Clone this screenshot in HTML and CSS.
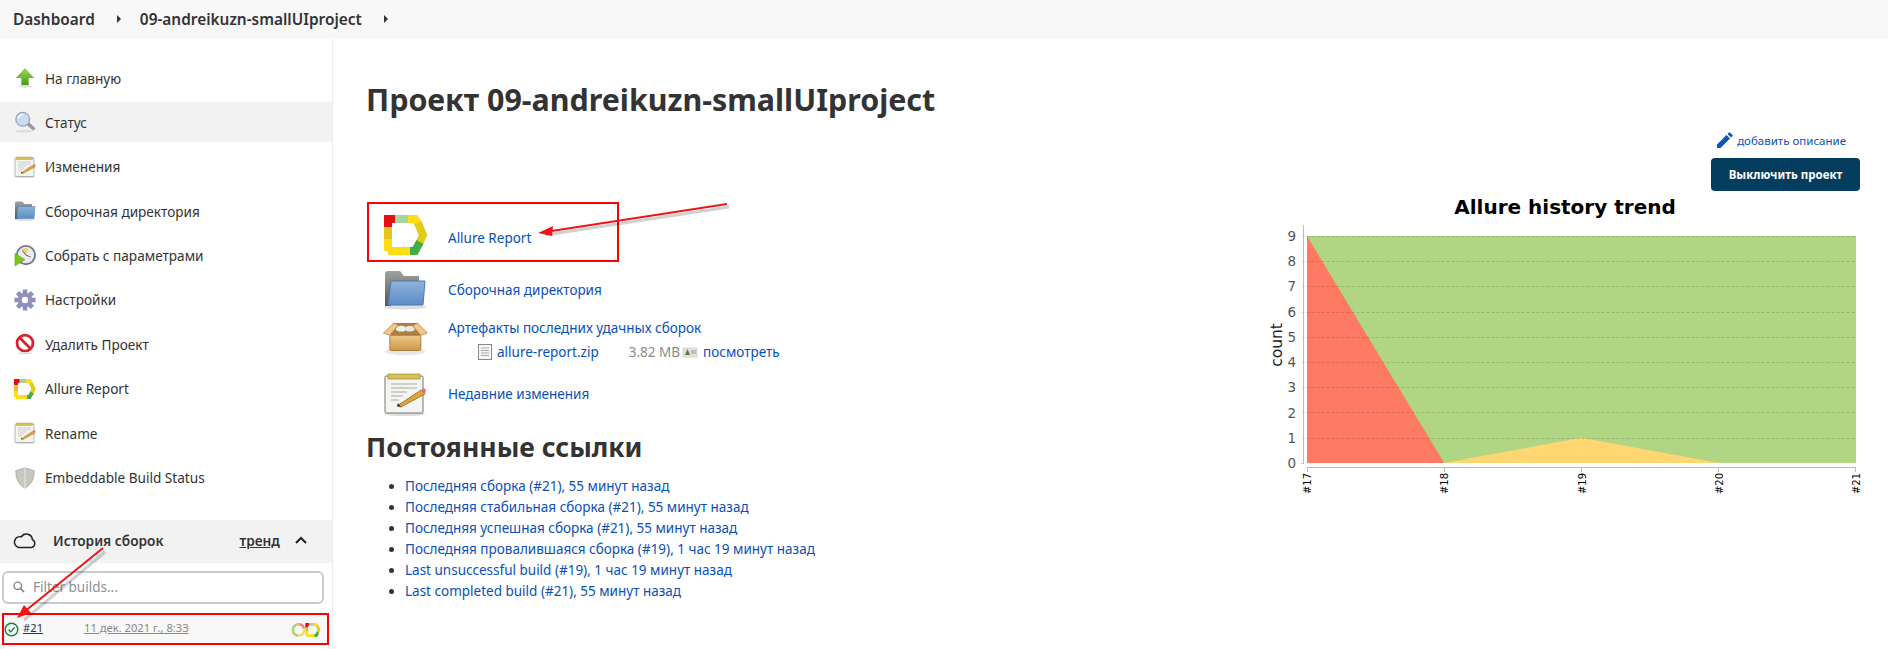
FILE: index.html
```html
<!DOCTYPE html>
<html lang="ru">
<head>
<meta charset="utf-8">
<title>09-andreikuzn-smallUIproject</title>
<link rel="stylesheet" href="styles.css">
</head>
<body>
<svg class="defs" width="0" height="0" aria-hidden="true">
  <defs>
    <linearGradient id="gFolder" x1="0" y1="0" x2="0" y2="1"><stop offset="0" stop-color="#8fb4dd"/><stop offset="1" stop-color="#5a8cc6"/></linearGradient>
    <linearGradient id="gGrey" x1="0" y1="0" x2="0" y2="1"><stop offset="0" stop-color="#a0a0a0"/><stop offset="1" stop-color="#555"/></linearGradient>
    <linearGradient id="gArrow" x1="0" y1="0" x2="0" y2="1"><stop offset="0" stop-color="#a5d85c"/><stop offset="1" stop-color="#3f9a1c"/></linearGradient>
    <linearGradient id="gBox" x1="0" y1="0" x2="0" y2="1"><stop offset="0" stop-color="#ecc98b"/><stop offset="1" stop-color="#cf9646"/></linearGradient>
    <symbol id="allure" viewBox="0 0 44 40">
      <g fill="none" stroke-width="8">
        <path d="M4 36V22" stroke="#ffdc14"/>
        <path d="M4 24V11" stroke="#e3c71c"/>
        <path d="M4 12V4H12" stroke="#e60f14"/>
        <path d="M11 4H25" stroke="#a9d3a0"/>
        <path d="M24 4H31L35 10" stroke="#ffdc14"/>
        <path d="M34 8L39 20L35 29" stroke="#e3cb1c"/>
        <path d="M36 27L31 36H25" stroke="#3fae49"/>
        <path d="M26 36H4" stroke="#ffdc14"/>
      </g>
    </symbol>
    <symbol id="folder" viewBox="0 0 44 40">
      <ellipse cx="22" cy="37" rx="21" ry="2.5" fill="#ddd"/>
      <path d="M2 4Q2 1 5 1H17L21 6H36V12H8V36H2Z" fill="url(#gGrey)"/>
      <path d="M8 11H42L40 35H5Z" fill="url(#gFolder)" stroke="#4b79b0"/>
    </symbol>
    <symbol id="notepad" viewBox="0 0 44 44">
      <ellipse cx="22" cy="42" rx="20" ry="2" fill="#ddd"/>
      <rect x="2" y="4" width="38" height="37" rx="1" fill="#f4f4f0" stroke="#777"/>
      <rect x="5" y="2" width="32" height="5" fill="#d9c15a" stroke="#8a7a2e" stroke-width=".6"/>
      <path d="M8 12H34M8 16H34M8 20H24M8 24H20M8 28H16" stroke="#aaa" fill="none"/>
      <path d="M14 34L38 18L42 22L18 35Z" fill="#e0a437" stroke="#875f16" stroke-width=".7"/>
      <path d="M38 18L42 22L43 18L41 16Z" fill="#e5707a"/>
      <path d="M14 34L15 31L18 35Z" fill="#333"/>
    </symbol>
    <symbol id="box" viewBox="0 0 48 40">
      <ellipse cx="23" cy="31" rx="21" ry="4" fill="#e6e6e6"/>
      <path d="M11 1H36L40 14H7Z" fill="#a9803f"/>
      <ellipse cx="19" cy="7" rx="6" ry="3" fill="#f0f0ea"/>
      <ellipse cx="28" cy="7" rx="5.5" ry="3" fill="#e6e6e0"/>
      <path d="M11.3 1L.3 11.6L7 14L16 3.3Z" fill="#efc88a" stroke="#b3823a" stroke-width=".8"/>
      <path d="M36 1L46.3 11.6L39.6 14L31 4Z" fill="#efc88a" stroke="#b3823a" stroke-width=".8"/>
      <rect x="7" y="14" width="32.6" height="16" rx="1.5" fill="url(#gBox)" stroke="#a87a36"/>
    </symbol>
    <symbol id="magnifier" viewBox="0 0 24 24">
      <ellipse cx="11" cy="22" rx="10" ry="1.5" fill="#ddd"/>
      <path d="M14 15L17 13L23 19L21 21Z" fill="#9a9a9a" stroke="#777" stroke-width=".5"/>
      <circle cx="9.5" cy="9" r="7.5" fill="#c9dcf4" stroke="#9aa9bd" stroke-width="1.5"/>
      <path d="M5 8A5 5 0 0 1 10 4" stroke="#fff" stroke-width="1.5" fill="none"/>
    </symbol>
  </defs>
</svg>

<header class="crumbs">
  <a class="crumb">Dashboard</a><span class="sep"></span>
  <a class="crumb crumb-project">09-andreikuzn-smallUIproject</a><span class="sep"></span>
</header>

<div class="shell">
  <aside class="side">
    <nav class="tasks">
      <a class="task"><svg class="ti" viewBox="0 0 24 24"><path d="M12 1L22 12H16V20H8V12H2Z" fill="url(#gArrow)"/><ellipse cx="12" cy="21" rx="7" ry="1.5" fill="#ddd"/></svg>На главную</a>
      <a class="task task-on"><svg class="ti"><use href="#magnifier"/></svg>Статус</a>
      <a class="task"><svg class="ti"><use href="#notepad"/></svg>Изменения</a>
      <a class="task"><svg class="ti"><use href="#folder"/></svg>Сборочная директория</a>
      <a class="task"><svg class="ti" viewBox="0 0 24 24"><circle cx="13" cy="11" r="10" fill="#ecebef" stroke="#74748c" stroke-width="2"/><path d="M8 5A7.5 7.5 0 0 1 16 4L13 11Z" fill="#e8d27a"/><path d="M13 11L9 6M13 11L18 13" stroke="#555"/><path d="M1 9L12 16L1 23Z" fill="#7cc41f" stroke="#4a9a10" stroke-width=".5"/></svg>Собрать с параметрами</a>
      <a class="task"><svg class="ti" viewBox="0 0 24 24"><g class="gear"><rect x="9.5" y=".5" width="5" height="5"/><rect x="9.5" y=".5" width="5" height="5" transform="rotate(45 12 12)"/><rect x="9.5" y=".5" width="5" height="5" transform="rotate(90 12 12)"/><rect x="9.5" y=".5" width="5" height="5" transform="rotate(135 12 12)"/><rect x="9.5" y=".5" width="5" height="5" transform="rotate(180 12 12)"/><rect x="9.5" y=".5" width="5" height="5" transform="rotate(225 12 12)"/><rect x="9.5" y=".5" width="5" height="5" transform="rotate(270 12 12)"/><rect x="9.5" y=".5" width="5" height="5" transform="rotate(315 12 12)"/><circle cx="12" cy="12" r="8"/></g><circle cx="12" cy="12" r="3.5" fill="#fff"/></svg>Настройки</a>
      <a class="task"><svg class="ti" viewBox="0 0 24 24"><circle cx="12" cy="11" r="8.7" fill="#fff" stroke="#d6232c" stroke-width="3"/><path d="M6 5L18 17" stroke="#d6232c" stroke-width="3"/><ellipse cx="12" cy="22" rx="8" ry="1.2" fill="#ddd"/></svg>Удалить Проект</a>
      <a class="task"><svg class="ti"><use href="#allure"/></svg>Allure Report</a>
      <a class="task"><svg class="ti"><use href="#notepad"/></svg>Rename</a>
      <a class="task"><svg class="ti" viewBox="0 0 24 24"><path d="M12 1L22 4C22 13 19 19 12 23C5 19 2 13 2 4Z" fill="#c8c8c0" stroke="#aaa"/><path d="M12 1V23" stroke="#eee"/></svg>Embeddable Build Status</a>
    </nav>

    <section class="history">
      <div class="hist-head">
        <svg class="cloud" viewBox="0 0 26 18"><path d="M6 16.5H20A4.5 4.5 0 0 0 21 8A6.5 6.5 0 0 0 9 5A5.5 5.5 0 0 0 6 16.5Z" fill="none" stroke="#222" stroke-width="1.6"/></svg>
        <span class="hist-title">История сборок</span>
        <a class="trend">тренд</a>
        <svg class="chev" viewBox="0 0 12 8"><path d="M1 7L6 2L11 7" fill="none" stroke="#222" stroke-width="2"/></svg>
      </div>
      <div class="filter">
        <svg class="search" viewBox="0 0 14 14"><circle cx="5.5" cy="5.5" r="4.3" fill="none" stroke="#667" stroke-width="1.3"/><path d="M8.8 8.8L13 13" stroke="#667" stroke-width="1.5"/></svg>
        <span>Filter builds...</span>
      </div>
      <div class="build">
        <svg class="ok" viewBox="0 0 16 16"><circle cx="8" cy="8" r="6.7" fill="none" stroke="#138347" stroke-width="1.5"/><path d="M4.8 8.2L7.2 10.5L11.2 5.8" fill="none" stroke="#138347" stroke-width="1.5"/></svg>
        <a class="build-no">#21</a>
        <a class="build-date">11 дек. 2021 г., 8:33</a>
        <svg class="badges" viewBox="0 0 31 14">
          <g fill="none" stroke-width="2.6">
            <path d="M8.5 1.3A5.700 5.700 0 0 0 8.500 12.700" stroke="#b7cf72"/>
            <path d="M8.5 1.3A5.700 5.700 0 0 1 14 5.500" stroke="#e88a7a"/>
            <path d="M14 5.500A5.700 5.700 0 0 1 8.500 12.700" stroke="#f0dc6a"/>
          </g>
          <use href="#allure" x="15" y="0" width="16" height="14"/>
        </svg>
      </div>
    </section>
  </aside>

  <main class="main">
    <h1 class="title">Проект 09-andreikuzn-smallUIproject</h1>
    <div class="actions">
      <a class="add-desc"><svg class="pencil" viewBox="0 0 16 16"><path d="M0 16V12.5L9.5 3L13 6.5L3.5 16ZM10.5 2L12 .5Q12.5 0 13 .5L15.5 3Q16 3.5 15.5 4L14 5.5Z" fill="#0b57c0"/></svg>добавить описание</a>
      <button class="disable" type="button">Выключить проект</button>
    </div>
    <div class="body">
      <div class="left">
        <div class="row row-boxed"><svg class="ri"><use href="#allure"/></svg><a class="link boxed-link">Allure Report</a></div>
        <div class="row row-folder"><svg class="ri"><use href="#folder"/></svg><a class="link">Сборочная директория</a></div>
        <div class="row row-art">
          <svg class="ri ri-box"><use href="#box"/></svg>
          <div class="art">
            <a class="link">Артефакты последних удачных сборок</a>
            <div class="art-file">
              <svg class="fileico" viewBox="0 0 14 16"><rect x=".5" y=".5" width="13" height="15" fill="#f6f6f6" stroke="#888"/><path d="M3 4H11M3 6.5H11M3 9H11M3 11.5H11" stroke="#aaa"/></svg>
              <a class="link">allure-report.zip</a>
              <span class="size">3.82 MB</span>
              <svg class="viewico" viewBox="0 0 16 12"><rect x="1" y="2" width="14" height="9" fill="#e6e4da" stroke="#bbb" stroke-width=".5"/><path d="M3 9L5.5 3L8 9Z" fill="#5c7a3a"/><path d="M9 5H14M9 7H14" stroke="#999"/></svg>
              <a class="link">посмотреть</a>
            </div>
          </div>
        </div>
        <div class="row row-notes"><svg class="ri"><use href="#notepad"/></svg><a class="link">Недавние изменения</a></div>

        <h2 class="perma-title">Постоянные ссылки</h2>
        <ul class="perma">
          <li><a class="link">Последняя сборка (#21), 55 минут назад</a></li>
          <li><a class="link">Последняя стабильная сборка (#21), 55 минут назад</a></li>
          <li><a class="link">Последняя успешная сборка (#21), 55 минут назад</a></li>
          <li><a class="link">Последняя провалившаяся сборка (#19), 1 час 19 минут назад</a></li>
          <li><a class="link">Last unsuccessful build (#19), 1 час 19 минут назад</a></li>
          <li><a class="link">Last completed build (#21), 55 минут назад</a></li>
        </ul>
      </div>
      <figure class="trendchart">
        <svg class="chart" viewBox="0 -4 620 304" width="620" height="304">
          <text class="ct" x="316" y="14" text-anchor="middle">Allure history trend</text>
          <rect x="58" y="36" width="549" height="227" fill="#b0d684"/>
          <polygon points="58,36 195.25,263 58,263" fill="#ff7a63"/>
          <polygon points="195.25,263 332.5,237.8 469.75,263" fill="#ffd671"/>
          <g class="grid">
            <path d="M52.5 36.5H607M52.5 61.5H607M52.5 86.5H607M52.5 112.5H607M52.5 137.500H607M52.5 162.5H607M52.5 187.5H607M52.5 212.5H607M52.5 238.5H607"/>
          </g>
          <path class="axis" d="M54.5 25V263M52.5 263.5H55M58 267.5H607M58.5 267V272M195.5 267V272M332.5 267V272M469.5 267V272M606.5 267V272"/>
          <g class="ytick" text-anchor="end">
            <text x="47" y="41">9</text><text x="47" y="66">8</text><text x="47" y="91">7</text><text x="47" y="117">6</text><text x="47" y="142">5</text><text x="47" y="167">4</text><text x="47" y="192">3</text><text x="47" y="218">2</text><text x="47" y="243">1</text><text x="47" y="268">0</text>
          </g>
          <text class="ylab" transform="translate(33 145) rotate(-90)" text-anchor="middle">count</text>
          <g class="xtick" text-anchor="end">
            <text transform="translate(62 273) rotate(-90)">#17</text>
            <text transform="translate(199.25 273) rotate(-90)">#18</text>
            <text transform="translate(336.5 273) rotate(-90)">#19</text>
            <text transform="translate(473.75 273) rotate(-90)">#20</text>
            <text transform="translate(611 273) rotate(-90)">#21</text>
          </g>
        </svg>
      </figure>
    </div>
  </main>
</div>

<svg class="notes" viewBox="0 0 1888 649" width="1888" height="649" aria-hidden="true">
  <g class="ashadow"><path d="M729 207L545 235M105 552L24 620"/></g>
  <path d="M727 204L545 232" stroke="#f01414" stroke-width="2" fill="none"/>
  <path d="M538 233L553 226L552 236Z" fill="#f01414"/>
  <path d="M103 548L24 612" stroke="#f01414" stroke-width="2" fill="none"/>
  <path d="M17 618L24 605L31 613Z" fill="#f01414"/>
</svg>
</body>
</html>
```

FILE: styles.css
```css
* { box-sizing: border-box; }
html, body { margin: 0; padding: 0; }
body {
  width: 1888px;
  height: 649px;
  overflow: hidden;
  position: relative;
  background: #fff;
  color: #333;
  font-family: "Noto Sans", "Open Sans", sans-serif;
  font-size: 14px;
}
.defs { position: absolute; }

.crumbs {
  height: 39px;
  background: #f8f8f8;
  display: flex;
  align-items: center;
  padding-left: 13px;
  padding-bottom: 1px;
}
.crumb { font-size: 15.4px; font-weight: 600; color: #333; }
.sep {
  width: 0;
  height: 0;
  border-left: 4px solid #333;
  border-top: 4px solid transparent;
  border-bottom: 4px solid transparent;
  margin-left: 22px;
  margin-right: 19px;
}

.shell { display: flex; height: 610px; }
.side {
  width: 333px;
  flex: none;
  border-right: 1px solid #eee;
  padding-top: 19px;
}
.tasks { display: flex; flex-direction: column; gap: 4.4px; }
.task {
  height: 40px;
  display: flex;
  align-items: center;
  gap: 9px;
  padding-left: 14px;
  font-size: 13.6px;
  color: #333;
}
.task-on { background: #f2f2f2; }
.ti { width: 22px; height: 22px; flex: none; }
.gear rect, .gear circle { fill: #8f90bd; }

.history { margin-top: 22px; }
.hist-head {
  height: 43px;
  background: #f2f2f2;
  display: flex;
  align-items: center;
  padding-left: 13px;
  padding-bottom: 2px;
}
.cloud { width: 24px; height: 17px; flex: none; }
.hist-title { margin-left: 16px; font-size: 13.7px; font-weight: 600; color: #333; }
.trend { margin-left: 76px; font-size: 13.7px; font-weight: 600; text-decoration: underline; color: #333; }
.chev { width: 12px; height: 8px; margin-left: 15px; }
.filter {
  margin: 8px 0 0 2px;
  width: 322px;
  height: 33px;
  border: 2px solid #c3ccd1;
  border-radius: 6px;
  display: flex;
  align-items: center;
  gap: 8px;
  padding-left: 9px;
  font-size: 13.5px;
  color: #8a9198;
}
.search { width: 12px; height: 12px; }
.build {
  margin: 9px 0 0 2px;
  width: 327px;
  height: 32px;
  border: 2px solid #f00;
  background: #f8f8f8;
  display: flex;
  align-items: center;
  padding-bottom: 2px;
  font-size: 11.2px;
}
.ok { width: 15px; height: 15px; flex: none; margin-top: 3px; }
.build-no { margin-left: 4px; color: #333; text-decoration: underline; }
.build-date { margin-left: 41px; color: #888; text-decoration: underline; }
.badges { width: 31px; height: 14px; margin-left: auto; margin-right: 6px; margin-top: 4px; }

.main { flex: 1; padding: 39px 28px 0 33px; min-width: 0; }
.title { margin: 0; font-size: 30.4px; font-weight: 700; line-height: 44px; color: #333; }
.actions { display: flex; flex-direction: column; align-items: flex-end; }
.add-desc { display: flex; align-items: center; gap: 4px; margin-top: 10px; margin-right: 14px; font-size: 11.5px; color: #0b4fb8; }
.pencil { width: 16px; height: 16px; }
.disable {
  margin-top: 10px;
  width: 149px;
  height: 33px;
  border: 0;
  border-radius: 4px;
  background: #053d5f;
  color: #fff;
  font: 700 11.5px "Noto Sans", sans-serif;
}
.body { display: flex; justify-content: space-between; margin-top: 4px; margin-right: -9px; }
.left { padding-top: 7px; }
.row { display: flex; align-items: center; }
.link { color: #0b4fb8; font-size: 13.5px; }
.ri { width: 44px; height: 40px; margin-left: 16px; margin-right: 21px; flex: none; }
.row-boxed {
  width: 252px;
  height: 60px;
  margin-left: 1px;
  border: 2px solid #f00;
  align-items: flex-end;
  padding-bottom: 5px;
}
.row-boxed .ri { margin-left: 15px; margin-right: 20px; }
.boxed-link { align-self: center; margin-top: 16px; }
.row-folder { height: 40px; margin-top: 8px; margin-left: 1px; }
.row-art { margin-top: 12px; height: 46px; align-items: flex-start; }
.row-art .ri-box { width: 46px; height: 38px; margin-right: 19px; margin-left: 17px; }
.art { margin-top: -4px; }
.art-file { display: flex; align-items: center; margin-top: 6px; padding-left: 30px; }
.fileico { width: 14px; height: 16px; margin-right: 5px; }
.size { margin-left: 30px; color: #8a8a8a; font-size: 13.5px; }
.viewico { width: 16px; height: 12px; margin: 0 5px 0 2px; }
.row-notes { height: 44px; margin-top: 4px; margin-left: 1px; }
.row-notes .ri { height: 44px; }
.perma-title { margin: 12px 0 0; font-size: 26.5px; font-weight: 700; line-height: 38px; color: #333; }
.perma { list-style: disc; margin: 10px 0 0; padding: 0 0 0 39px; font-size: 13.5px; }
.perma li { line-height: 21.1px; }
.perma li::marker { color: #333; font-size: 13px; }

.trendchart { margin: 1px 0 0; flex: none; }
.chart { display: block; }
.ct { font: 700 20px "DejaVu Sans", sans-serif; fill: #000; }
.grid path { stroke: #000; stroke-opacity: .14; stroke-dasharray: 3 2; fill: none; }
.axis { stroke: #bbb; stroke-width: 1; fill: none; }
.ytick text { font: 13.5px "DejaVu Sans", sans-serif; fill: #555; }
.ylab { font: 15.5px "DejaVu Sans", sans-serif; fill: #222; }
.xtick text { font: 10px "DejaVu Sans", sans-serif; fill: #000; }

.notes { position: absolute; left: 0; top: 0; pointer-events: none; }
.ashadow path { stroke: #000; stroke-opacity: .18; stroke-width: 3; fill: none; }
```
